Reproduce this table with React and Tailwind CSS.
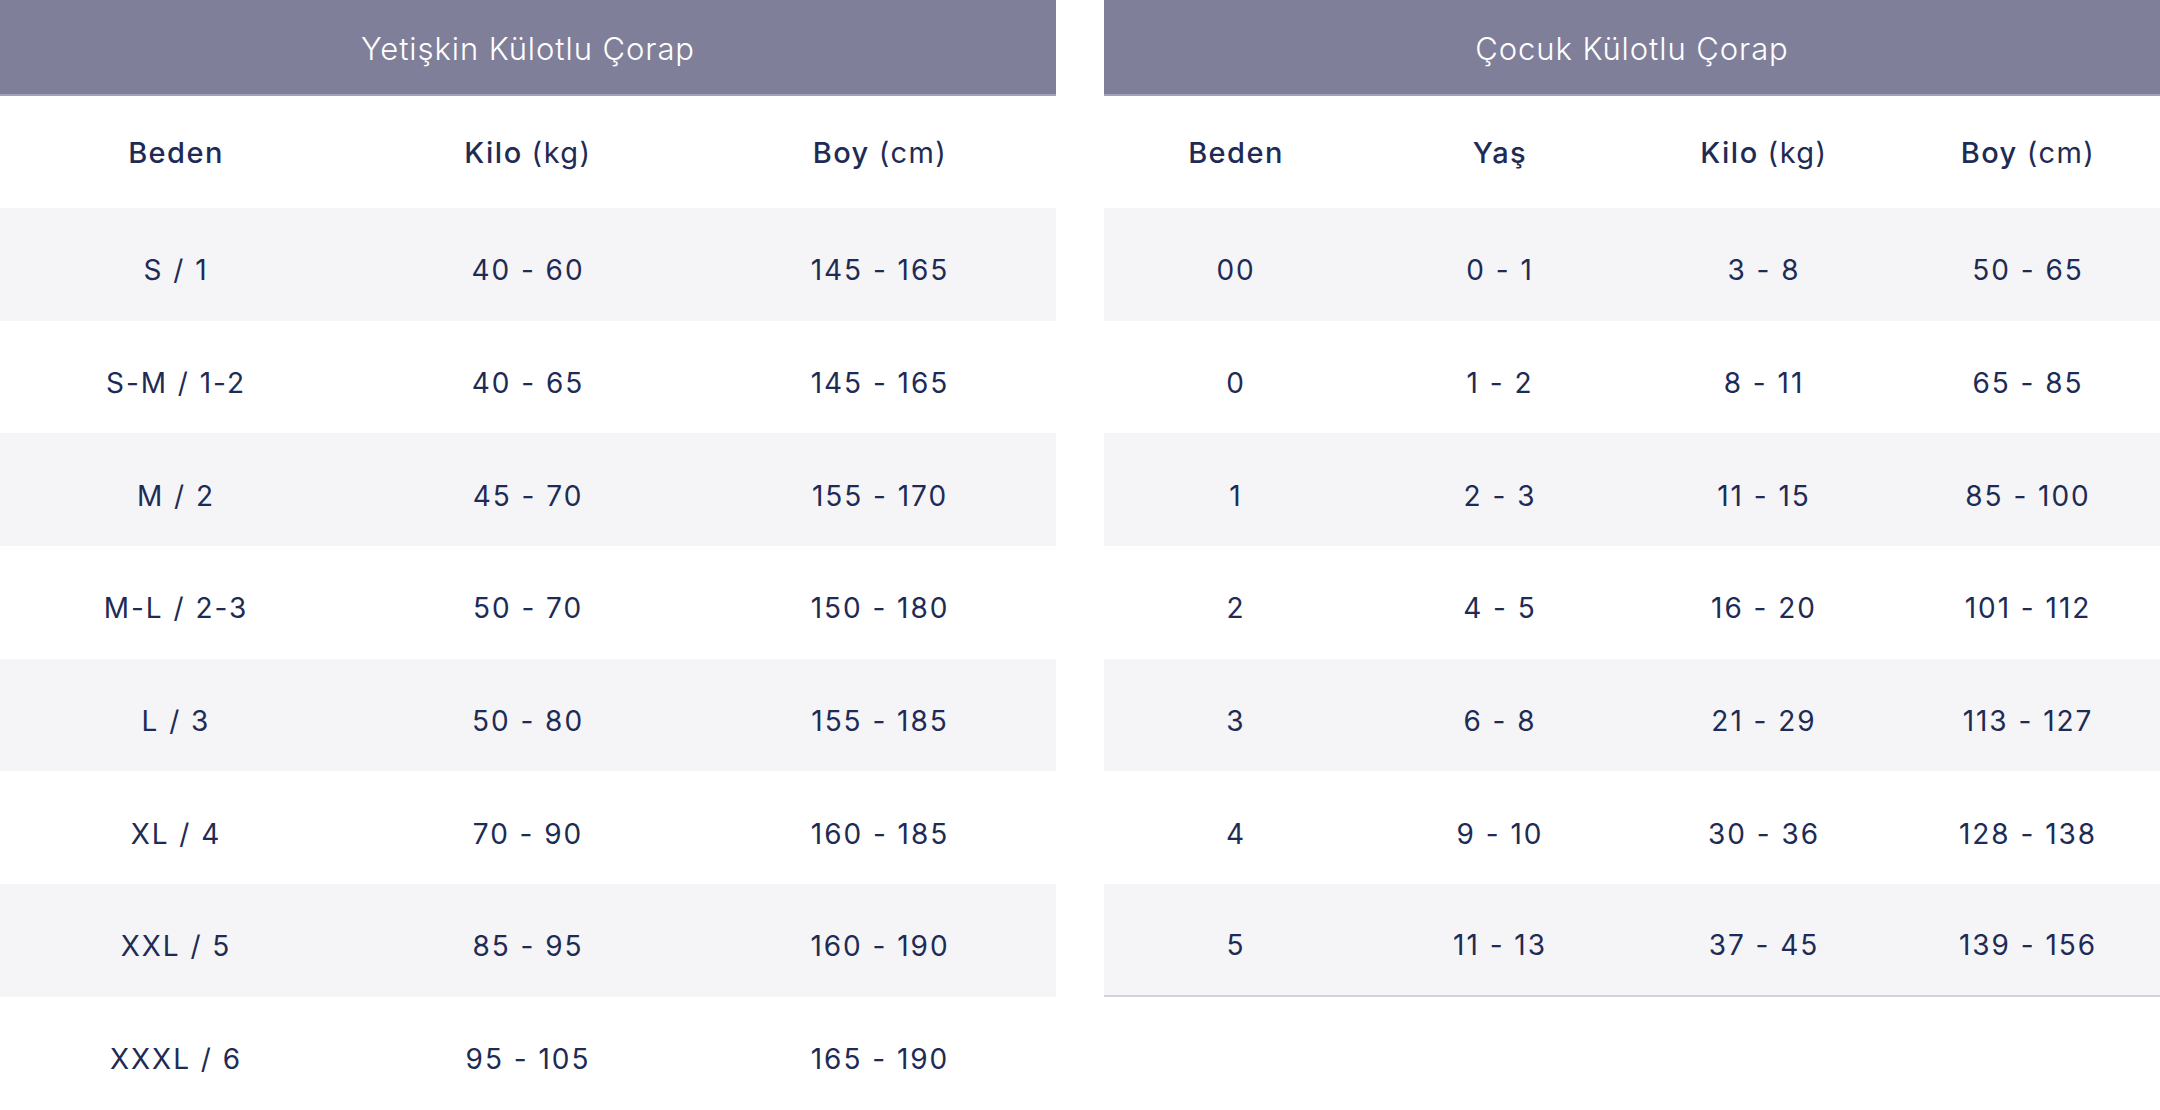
import React from "react";

const adult = [
  ["S / 1", "40 - 60", "145 - 165"],
  ["S-M / 1-2", "40 - 65", "145 - 165"],
  ["M / 2", "45 - 70", "155 - 170"],
  ["M-L / 2-3", "50 - 70", "150 - 180"],
  ["L / 3", "50 - 80", "155 - 185"],
  ["XL / 4", "70 - 90", "160 - 185"],
  ["XXL / 5", "85 - 95", "160 - 190"],
  ["XXXL / 6", "95 - 105", "165 - 190"],
];

const child = [
  ["00", "0 - 1", "3 - 8", "50 - 65"],
  ["0", "1 - 2", "8 - 11", "65 - 85"],
  ["1", "2 - 3", "11 - 15", "85 - 100"],
  ["2", "4 - 5", "16 - 20", "101 - 112"],
  ["3", "6 - 8", "21 - 29", "113 - 127"],
  ["4", "9 - 10", "30 - 36", "128 - 138"],
  ["5", "11 - 13", "37 - 45", "139 - 156"],
];

function HeadCell({ bold, rest }) {
  return (
    <div className="flex items-center justify-center pt-[2px] text-[29px] text-[#1e2b55] tracking-[0.05em]">
      <span className="font-medium">{bold}</span>
      {rest ? <span className="font-normal ml-[9px]">{rest}</span> : null}
    </div>
  );
}

function Table({ title, heads, rows, cols, bottomBorder }) {
  return (
    <div className="w-[1056px] shrink-0 flex flex-col">
      <div className="h-[96px] bg-[#807f9a] border-b-2 border-[#a3a1bb] flex items-center justify-center">
        <span className="text-white text-[31px] font-light tracking-[0.03em] pt-[4px]">{title}</span>
      </div>
      <div className={`grid ${cols} h-[112px]`}>
        {heads.map((h, i) => (
          <HeadCell key={i} bold={h[0]} rest={h[1]} />
        ))}
      </div>
      {rows.map((r, i) => (
        <div
          key={i}
          className={`grid ${cols} h-[112.7px] ${i % 2 === 0 ? "bg-[#f5f5f7]" : "bg-white"} ${
            bottomBorder && i === rows.length - 1 ? "border-b-2 border-[#d4d4d8]" : ""
          }`}
        >
          {r.map((c, j) => (
            <div
              key={j}
              className="flex items-center justify-center pt-[12px] text-[28px] text-[#1e2b55] tracking-[0.07em]"
            >
              {c}
            </div>
          ))}
        </div>
      ))}
    </div>
  );
}

export default function App() {
  return (
    <div
      className="w-[2160px] h-[1110px] overflow-hidden bg-white flex items-start gap-[48px]"
      style={{ fontFamily: "Inter, 'Noto Sans', sans-serif" }}
    >
      <Table
        title="Yetişkin Külotlu Çorap"
        heads={[["Beden"], ["Kilo", "(kg)"], ["Boy", "(cm)"]]}
        rows={adult}
        cols="grid-cols-3"
      />
      <Table
        title="Çocuk Külotlu Çorap"
        heads={[["Beden"], ["Yaş"], ["Kilo", "(kg)"], ["Boy", "(cm)"]]}
        rows={child}
        cols="grid-cols-4"
        bottomBorder
      />
    </div>
  );
}
